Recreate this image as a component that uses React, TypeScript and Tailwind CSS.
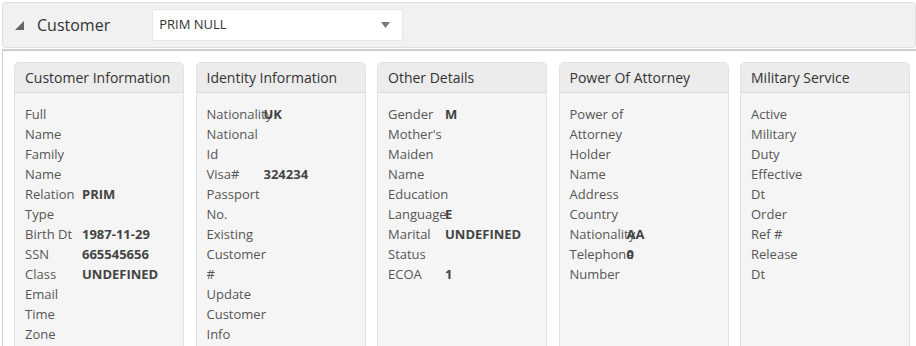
import React from 'react';

type Row = { label: string; value?: string };

const CARDS: { title: string; rows: Row[] }[] = [
  {
    title: 'Customer Information',
    rows: [
      { label: 'Full Name' },
      { label: 'Family Name' },
      { label: 'Relation Type', value: 'PRIM' },
      { label: 'Birth Dt', value: '1987-11-29' },
      { label: 'SSN', value: '665545656' },
      { label: 'Class', value: 'UNDEFINED' },
      { label: 'Email' },
      { label: 'Time Zone' },
    ],
  },
  {
    title: 'Identity Information',
    rows: [
      { label: 'Nationality', value: 'UK' },
      { label: 'National Id' },
      { label: 'Visa#', value: '324234' },
      { label: 'Passport No.' },
      { label: 'Existing Customer #' },
      { label: 'Update Customer Info' },
    ],
  },
  {
    title: 'Other Details',
    rows: [
      { label: 'Gender', value: 'M' },
      { label: "Mother's Maiden Name" },
      { label: 'Education' },
      { label: 'Language', value: 'E' },
      { label: 'Marital Status', value: 'UNDEFINED' },
      { label: 'ECOA', value: '1' },
    ],
  },
  {
    title: 'Power Of Attorney',
    rows: [
      { label: 'Power of Attorney Holder Name' },
      { label: 'Address Country' },
      { label: 'Nationality', value: 'AA' },
      { label: 'Telephone Number', value: '0' },
    ],
  },
  {
    title: 'Military Service',
    rows: [
      { label: 'Active Military Duty' },
      { label: 'Effective Dt' },
      { label: 'Order Ref #' },
      { label: 'Release Dt' },
    ],
  },
];

function Card({ title, rows }: { title: string; rows: Row[] }) {
  return (
    <div className="w-[170px] shrink-0 h-[300px] border border-[#e2e2e2] rounded-t-[5px] bg-[#f5f5f5] overflow-hidden">
      <div className="h-[30px] px-[10px] flex items-center bg-[#ececec] border-b border-[#dcdcdc] text-[14px] text-[#333]">
        {title}
      </div>
      <div className="px-[10px] pt-[11px] text-[13px] leading-[20px]">
        {rows.map((r, i) => (
          <div key={i} className="flex">
            <div className="w-[55px] shrink-0 text-[#555]">{r.label}</div>
            {r.value && <div className="ml-[2px] font-bold text-[#444]">{r.value}</div>}
          </div>
        ))}
      </div>
    </div>
  );
}

export default function App() {
  return (
    <div className="w-[916px] h-[346px] overflow-hidden bg-white pt-[2px] pl-[2px]" style={{ fontFamily: '"Open Sans", "Noto Sans", sans-serif' }}>
      {/* Header */}
      <div className="h-[46px] flex items-center bg-[#f1f1f1] border border-[#dedede] rounded-[4px]">
        <svg width="9" height="9" viewBox="0 0 9 9" className="ml-[12px]">
          <polygon points="9,0 9,9 0,9" fill="#666" />
        </svg>
        <span className="ml-[13px] text-[16px] text-[#333]">Customer</span>
        <div className="ml-[42px] w-[251px] h-[32px] bg-white border border-[#e6e6e6] rounded-[2px] flex items-center justify-between pl-[6px] pr-[12px]">
          <span className="text-[13px] text-[#333]">PRIM NULL</span>
          <svg width="9" height="6" viewBox="0 0 9 6">
            <polygon points="0,0 9,0 4.5,6" fill="#777" />
          </svg>
        </div>
      </div>

      {/* Content */}
      <div className="mt-[1px] border-t-2 border-l border-[#cfcfcf] pt-[11px] pl-[11px] flex gap-[11.5px]">
        {CARDS.map(c => (
          <Card key={c.title} title={c.title} rows={c.rows} />
        ))}
      </div>
    </div>
  );
}
